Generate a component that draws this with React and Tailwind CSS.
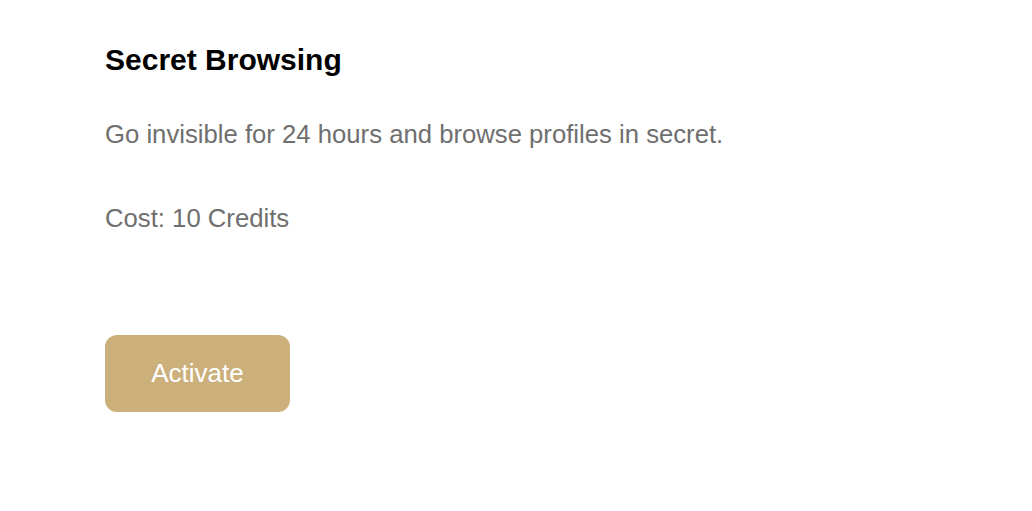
export default function App() {
  return (
    <div className="min-h-[511px] w-[1032px] bg-white font-['Liberation_Sans',Arial,sans-serif]">
      <div className="pl-[105px] pt-[42px]">
        <h1 className="text-[30px] leading-[36px] font-bold text-black">Secret Browsing</h1>
        <p className="mt-[41px] text-[25.7px] leading-[30px] text-[#6f6f6f]">
          Go invisible for 24 hours and browse profiles in secret.
        </p>
        <p className="mt-[54px] text-[25.7px] leading-[30px] text-[#6f6f6f]">Cost: 10 Credits</p>
        <button className="mt-[102px] flex h-[77px] w-[185px] items-center justify-center rounded-[12px] bg-[#cbb07b] text-[26px] text-white">
          Activate
        </button>
      </div>
    </div>
  );
}
